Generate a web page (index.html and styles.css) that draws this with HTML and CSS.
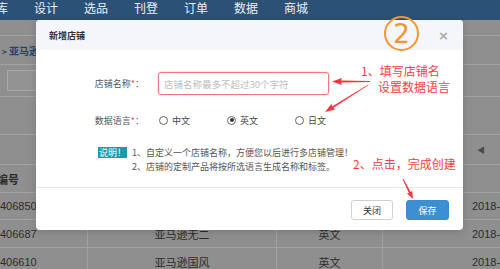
FILE: index.html
```html
<!DOCTYPE html>
<html lang="zh-CN">
<head>
  <meta charset="UTF-8" />
  <title>新增店铺</title>
  <meta name="viewport" content="width=device-width, initial-scale=1.0" />
  <link rel="stylesheet" href="styles.css">
</head>
<body>

  <!-- background page (dimmed) -->
  <div class="page">
    <nav class="topnav">
      <span class="first">库</span>
      <span>设计</span>
      <span>选品</span>
      <span>刊登</span>
      <span>订单</span>
      <span>数据</span>
      <span>商城</span>
    </nav>
    <div class="band"></div>
    <div class="crumb"><small>&gt;</small> 亚马逊店铺</div>
    <div class="toolbar"><div class="search-box"></div></div>
    <div class="toolbar tall"></div>
    <div class="pager"><span class="pager-prev">◀</span></div>

    <div class="grid">
      <div class="cell head first-col">编号</div>
      <div class="cell head"></div>
      <div class="cell head"></div>
      <div class="cell head last-col"></div>

      <div class="cell first-col">406850</div>
      <div class="cell"></div>
      <div class="cell"></div>
      <div class="cell last-col">2018-06-12 10:23:41</div>

      <div class="cell first-col">406687</div>
      <div class="cell">亚马逊无二</div>
      <div class="cell">英文</div>
      <div class="cell last-col">2018-06-08 15:02:17</div>

      <div class="cell first-col">406610</div>
      <div class="cell">亚马逊国风</div>
      <div class="cell">英文</div>
      <div class="cell last-col">2018-06-07 09:41:55</div>
    </div>
  </div>

  <!-- modal layer -->
  <div class="mask">
    <div class="modal">
      <div class="modal-head">
        <span class="modal-title">新增店铺</span>
        <span class="modal-close">×</span>
      </div>

      <div class="modal-body">
        <div class="form-row">
          <label class="form-label">店铺名称<i>*</i>：</label>
          <input type="text" class="shop-input" placeholder="店铺名称最多不超过30个字符">
        </div>

        <div class="form-row lang-row">
          <span class="form-label">数据语言<i>*</i>：</span>
          <div class="radio-group">
            <span class="radio-opt"><span class="radio"></span>中文</span>
            <span class="radio-opt"><span class="radio on"></span>英文</span>
            <span class="radio-opt"><span class="radio"></span>日文</span>
          </div>
        </div>

        <div class="notice">
          <span class="badge">说明！</span>
          <div class="notice-text">
            <p>1、自定义一个店铺名称，方便您以后进行多店铺管理！</p>
            <p>2、店铺的定制产品将按所选语言生成名称和标签。</p>
          </div>
        </div>
      </div>

      <div class="modal-foot">
        <button class="btn">关闭</button>
        <button class="btn btn-primary">保存</button>
      </div>
    </div>

    <!-- tutorial annotations -->
    <div class="step-num">2</div>
    <div class="note note-1">1、填写店铺名<br><span class="indent">设置数据语言</span></div>
    <div class="note note-2">2、点击，完成创建</div>
    <svg class="arrows" width="500" height="269" viewBox="0 0 500 269">
      <polygon points="332,81.5 342,78 341,80.6 370,81.1 370,81.9 341,82.4 342,85" />
      <polygon points="325,112 335.3,109.6 333.2,108.1 368.2,85.3 367.8,84.7 332.1,106.4 331.6,103.7" />
      <polygon points="413,199 412.1,190.5 410.8,192.3 403.4,178.8 402.6,179.2 409,193.2 406.7,193.2" />
    </svg>
  </div>

</body>
</html>
```

FILE: styles.css
```css
:root {
  --dim-bg: #8f8f8f;
  --dim-line: #a2a2a2;
  --dim-text: #2c2c2c;
  --nav-blue: #2b5176;
  --note-red: #f23f42;
  --step-orange: #f39530;
}

body {
  margin: 0;
  width: 500px;
  height: 269px;
  overflow: hidden;
  position: relative;
  font-family: "Noto Sans CJK SC", "Noto Sans", sans-serif;
  background: var(--dim-bg);
}

/* --- background page --- */
.page {
  width: 700px;
  color: var(--dim-text);
}

.topnav {
  height: 20px;
  background: var(--nav-blue);
  display: flex;
  gap: 26px;
  font-size: 12px;
  line-height: 15px;
  color: #e9eff5;
  white-space: nowrap;
}
.topnav .first {
  margin-left: -4px;
}

.band {
  height: 15px;
  border-bottom: 1px solid var(--dim-line);
}

.crumb {
  height: 29px;
  box-sizing: border-box;
  padding: 8px 0 0 2px;
  border-bottom: 1px solid var(--dim-line);
  font-size: 10px;
  line-height: 14px;
  font-weight: bold;
  color: #23466c;
}
.crumb small {
  font-size: 8px;
}

.toolbar {
  height: 32px;
  box-sizing: border-box;
  padding: 5px 0 0 7px;
  border-bottom: 1px solid var(--dim-line);
}
.toolbar.tall {
  height: 38px;
}
.search-box {
  width: 150px;
  height: 21px;
  box-sizing: border-box;
  border: 1px solid #a9a9a9;
  background: #939393;
}

.pager {
  height: 30px;
  border-bottom: 1px solid var(--dim-line);
  display: flex;
  align-items: center;
  padding-left: 477px;
  box-sizing: border-box;
}
.pager-prev {
  font-size: 8px;
  color: #4a4a4a;
}

.grid {
  display: grid;
  grid-template-columns: 88px 189px 106px 1fr;
  grid-template-rows: 28px 27px 28px 28px;
  font-size: 11px;
}
.cell {
  border-right: 1px solid var(--dim-line);
  border-bottom: 1px solid var(--dim-line);
  display: flex;
  align-items: center;
  justify-content: center;
  white-space: nowrap;
  overflow: hidden;
}
.cell.head {
  font-weight: bold;
}
.cell.first-col {
  justify-content: flex-start;
  font-family: "Liberation Sans", sans-serif;
}
.cell.head.first-col {
  font-family: "Noto Sans CJK SC", sans-serif;
  text-indent: -3px;
}
.cell.last-col {
  justify-content: flex-start;
  padding-left: 89px;
  font-family: "Liberation Sans", sans-serif;
}

/* --- modal --- */
.mask {
  position: absolute;
  inset: 0;
}

.modal {
  position: absolute;
  left: 36px;
  top: 20px;
  width: 427px;
  height: 210px;
  background: #fff;
  border-radius: 4px;
  box-shadow: 0 2px 8px rgba(0,0,0,0.15);
  display: flex;
  flex-direction: column;
  overflow: hidden;
}

.modal-head {
  height: 30px;
  background: #f5f6f9;
  display: flex;
  align-items: center;
  padding: 0 14px 0 13px;
}
.modal-title {
  font-size: 9px;
  font-weight: bold;
  color: #333;
}
.modal-close {
  margin-left: auto;
  font-family: "DejaVu Sans", sans-serif;
  font-size: 13px;
  font-weight: bold;
  color: #a8a8a8;
}

.modal-body {
  flex: 1;
  padding-top: 22px;
  border-bottom: 1px solid #e6e6e6;
}

.form-row {
  display: flex;
  align-items: center;
}
.form-label {
  width: 122px;
  box-sizing: border-box;
  padding-right: 14px;
  text-align: right;
  font-size: 9px;
  color: #555;
}
.form-label i {
  font-style: normal;
  color: #f04848;
}

.shop-input {
  width: 171px;
  height: 23px;
  box-sizing: border-box;
  margin: 0;
  padding: 0 5px;
  border: 1px solid #f07a7a;
  border-radius: 3px;
  box-shadow: 0 0 2px rgba(240, 90, 90, 0.45);
  font-family: inherit;
  font-size: 9.5px;
  outline: none;
}
.shop-input::placeholder {
  color: #bdbdbd;
}

.lang-row {
  margin-top: 16px;
  height: 18px;
}
.radio-group {
  display: flex;
  gap: 37px;
  margin-left: 1px;
  font-size: 9px;
  color: #444;
}
.radio-opt {
  display: flex;
  align-items: center;
  gap: 4px;
}
.radio {
  width: 9px;
  height: 9px;
  box-sizing: border-box;
  border: 1px solid #666;
  border-radius: 50%;
  display: flex;
  align-items: center;
  justify-content: center;
}
.radio.on::after {
  content: "";
  width: 4px;
  height: 4px;
  border-radius: 50%;
  background: #333;
}

.notice {
  display: flex;
  align-items: flex-start;
  gap: 5px;
  margin: 17px 0 0 62px;
}
.badge {
  margin-top: 1px;
  padding: 0 1px;
  background: #1d9aa6;
  color: #fff;
  font-size: 9px;
  line-height: 11px;
}
.notice-text p {
  margin: 0;
  font-size: 9px;
  line-height: 13.5px;
  color: #555;
}

.modal-foot {
  height: 42px;
  box-sizing: border-box;
  padding: 12px 14px 0 0;
  display: flex;
  justify-content: flex-end;
  gap: 13px;
}
.btn {
  width: 42px;
  height: 20px;
  padding: 0;
  border: 1px solid #cfcfcf;
  border-radius: 3px;
  background: #fff;
  color: #333;
  font-family: inherit;
  font-size: 9px;
}
.btn-primary {
  width: 43px;
  border-color: #3a8bd0;
  background: #3d8fd3;
  color: #fff;
}

/* --- tutorial annotations --- */
.step-num {
  position: absolute;
  left: 384px;
  top: 16px;
  width: 35px;
  height: 35px;
  box-sizing: border-box;
  border: 2px solid var(--step-orange);
  border-radius: 50%;
  display: flex;
  align-items: center;
  justify-content: center;
  font-family: "DejaVu Sans", sans-serif;
  font-size: 26px;
  line-height: 1;
  color: var(--step-orange);
}

.note {
  position: absolute;
  font-size: 12px;
  line-height: 16px;
  color: var(--note-red);
  white-space: nowrap;
}
.note-1 {
  left: 361px;
  top: 63px;
}
.note-1 .indent {
  padding-left: 17px;
}
.note-2 {
  left: 353px;
  top: 156px;
}

.arrows {
  position: absolute;
  left: 0;
  top: 0;
  fill: #f0363c;
}
```
